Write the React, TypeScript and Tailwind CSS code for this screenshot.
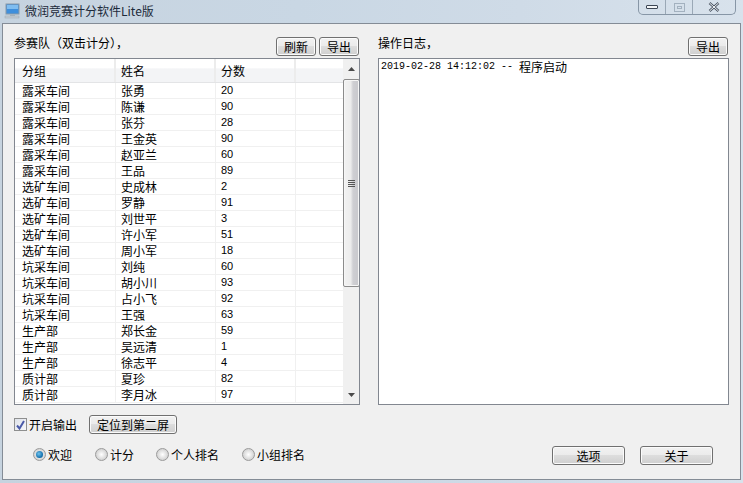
import React from "react";

const rows: [string, string, string][] = [
  ["露采车间", "张勇", "20"],
  ["露采车间", "陈谦", "90"],
  ["露采车间", "张芬", "28"],
  ["露采车间", "王金英", "90"],
  ["露采车间", "赵亚兰", "60"],
  ["露采车间", "王品", "89"],
  ["选矿车间", "史成林", "2"],
  ["选矿车间", "罗静", "91"],
  ["选矿车间", "刘世平", "3"],
  ["选矿车间", "许小军", "51"],
  ["选矿车间", "周小军", "18"],
  ["坑采车间", "刘纯", "60"],
  ["坑采车间", "胡小川", "93"],
  ["坑采车间", "占小飞", "92"],
  ["坑采车间", "王强", "63"],
  ["生产部", "郑长金", "59"],
  ["生产部", "吴远清", "1"],
  ["生产部", "徐志平", "4"],
  ["质计部", "夏珍", "82"],
  ["质计部", "李月冰", "97"],
];

const font = "[font-family:'Noto_Sans_CJK_SC','Liberation_Sans',sans-serif]";

function Btn({ label, w }: { label: string; w: string }) {
  return (
    <button
      className={`${w} h-[19px] flex items-center justify-center rounded-[3px] border border-[#707070] bg-[linear-gradient(#f2f2f2_0%,#ebebeb_48%,#dddddd_50%,#cfcfcf_100%)] text-[12px] leading-none text-black shadow-[inset_0_0_0_1px_#fbfbfb]`}
    >
      {label}
    </button>
  );
}

function Radio({ label, on, gap }: { label: string; on?: boolean; gap: string }) {
  return (
    <div className={`flex items-center gap-[2px] ${gap}`}>
      <span
        className={`w-[13px] h-[13px] rounded-full border border-[#9a9a9a] flex items-center justify-center bg-[radial-gradient(circle,#ffffff_0%,#d4d4d4_70%,#ececec_100%)]`}
      >
        {on && <span className="w-[7px] h-[7px] rounded-full bg-[radial-gradient(circle_at_40%_40%,#6fc3ee_0%,#0e6aa8_70%,#0a4a7c_100%)]" />}
      </span>
      <span className="text-[12px] leading-none">{label}</span>
    </div>
  );
}

function Arrow({ up }: { up?: boolean }) {
  return (
    <svg width="7" height="4" viewBox="0 0 7 4">
      <path d={up ? "M3.5 0L7 4H0Z" : "M0 0H7L3.5 4Z"} fill="#4a4a4a" />
    </svg>
  );
}

export default function App() {
  return (
    <div className={`w-[743px] h-[483px] overflow-hidden flex flex-col bg-[linear-gradient(90deg,#c6d3df_0%,#c9d7e4_40%,#cfdbe7_70%,#d8e2ec_100%)] text-black ${font}`}>
      {/* Title bar */}
      <div className="h-[23px] shrink-0 flex items-start">
        <div className="flex items-center pl-[4px] pt-[1px] h-[21px]">
          <svg width="16" height="16" viewBox="0 0 16 16">
            <rect x="2" y="1" width="13" height="10" fill="#3f8fdc" stroke="#8a9aa8" strokeWidth="1" />
            <rect x="3" y="2" width="11" height="4" fill="#7fbdf0" />
            <rect x="6" y="11" width="5" height="2" fill="#a8b4be" />
            <rect x="1" y="13" width="14" height="2" fill="#c4ccd3" stroke="#9aa6b0" strokeWidth="0.5" />
          </svg>
          <span className="ml-[5px] text-[12px] leading-none text-[#1c2a3a]">微润竞赛计分软件Lite版</span>
        </div>
        <div className="ml-auto mr-[7px] flex h-[15px] w-[98px] rounded-b-[5px] border border-t-0 border-[#8796a6] overflow-hidden">
          <div className="w-[27px] border-r border-[#9aa8b6] flex items-center justify-center">
            <span className="w-[12px] h-[4px] border border-[#3c4654] bg-[#f4f6f8] rounded-[1px]" />
          </div>
          <div className="w-[27px] border-r border-[#9aa8b6] flex items-center justify-center">
            <span className="w-[11px] h-[9px] border border-[#a3b1bf] flex items-center justify-center">
              <span className="w-[5px] h-[3px] border border-[#a3b1bf]" />
            </span>
          </div>
          <div className="flex-1 flex items-center justify-center">
            <svg width="12" height="10" viewBox="0 0 12 10">
              <path d="M1.5 1L10.5 9M10.5 1L1.5 9" stroke="#4b5664" strokeWidth="2.4" />
              <path d="M1.5 1L10.5 9M10.5 1L1.5 9" stroke="#f2f4f6" strokeWidth="1" />
            </svg>
          </div>
        </div>
      </div>

      {/* Client area */}
      <div className="mx-[2px] h-[457px] shrink-0 border border-[#848c96] bg-[#f0f0f0] flex flex-col px-[11px]">
        <div className="flex h-[381px] shrink-0">
          {/* Left */}
          <div className="w-[346px] shrink-0 flex flex-col">
            <div className="h-[34px] flex items-start">
              <span className="text-[12px] leading-none mt-[13px]">参赛队（双击计分），</span>
              <div className="ml-auto flex gap-[3px] mt-[13px] mr-[1px]">
                <Btn label="刷新" w="w-[40px]" />
                <Btn label="导出" w="w-[40px]" />
              </div>
            </div>
            <div className="h-[347px] border border-[#828790] bg-white flex overflow-hidden">
              <div className="w-[328px] shrink-0 overflow-hidden">
                <div className="flex h-[24px] bg-[linear-gradient(#ffffff_0%,#ffffff_40%,#f3f4f6_42%,#f3f4f6_100%)] border-b border-[#e3e4e6] text-[12px] leading-none">
                  <div className="w-[101px] pl-[7px] flex items-center border-r-2 border-[#ececec]">分组</div>
                  <div className="w-[100px] pl-[5px] flex items-center border-r-2 border-[#ececec]">姓名</div>
                  <div className="w-[80px] pl-[5px] flex items-center border-r-2 border-[#ececec]">分数</div>
                  <div className="flex-1" />
                </div>
                {rows.map((r, i) => (
                  <div key={i} className="flex h-[16px] border-b border-[#f0f0f0] text-[12px] leading-none">
                    <div className="w-[101px] pl-[7px] flex items-center border-r border-[#f0f0f0] text-[12px]">{r[0]}</div>
                    <div className="w-[100px] pl-[5px] flex items-center border-r border-[#f0f0f0]">{r[1]}</div>
                    <div className="w-[80px] pl-[5px] flex items-center border-r border-[#f0f0f0] text-[11px] font-['Liberation_Sans']">{r[2]}</div>
                    <div className="flex-1" />
                  </div>
                ))}
              </div>
              {/* Scrollbar */}
              <div className="w-[17px] shrink-0 bg-[#f0f0f0] flex flex-col">
                <div className="h-[20px] flex items-center justify-center"><Arrow up /></div>
                <div className="h-[208px] rounded-[2px] border border-[#8b8b8b] bg-[linear-gradient(90deg,#f2f2f2_0%,#ececec_45%,#cfcfd3_60%,#c8c8cc_100%)] flex flex-col items-center justify-center gap-[1px] shadow-[inset_0_0_0_1px_#f6f6f6]">
                  <span className="w-[7px] h-[1px] bg-[#555]" />
                  <span className="w-[7px] h-[1px] bg-[#555]" />
                  <span className="w-[7px] h-[1px] bg-[#555]" />
                  <span className="w-[7px] h-[1px] bg-[#555]" />
                </div>
                <div className="flex-1" />
                <div className="h-[18px] flex items-center justify-center"><Arrow /></div>
              </div>
            </div>
          </div>

          {/* Right */}
          <div className="ml-[18px] w-[351px] shrink-0 flex flex-col">
            <div className="h-[34px] flex items-start">
              <span className="text-[12px] leading-none mt-[13px]">操作日志，</span>
              <div className="ml-auto mt-[13px] mr-[1px]">
                <Btn label="导出" w="w-[40px]" />
              </div>
            </div>
            <div className="h-[347px] border border-[#828790] bg-white px-[2px] pt-[1px]">
              <div className="flex items-center h-[14px] font-['Liberation_Mono'] text-[10px] leading-none whitespace-pre">
                2019-02-28 14:12:02 -- <span className={`text-[12px] ${font}`}>程序启动</span>
              </div>
            </div>
          </div>
        </div>

        {/* Bottom */}
        <div className="flex items-center h-[19px] mt-[10px]">
          <span className="w-[13px] h-[13px] border border-[#8e8f8f] bg-[linear-gradient(135deg,#dfe3ea,#f6f7f9)] flex items-center justify-center">
            <svg width="9" height="10" viewBox="0 0 9 10">
              <path d="M1 5.5L3.5 8.5L8 1" fill="none" stroke="#4a5aa8" strokeWidth="2" />
            </svg>
          </span>
          <span className="ml-[2px] text-[12px] leading-none">开启输出</span>
          <div className="ml-[12px]">
            <Btn label="定位到第二屏" w="w-[88px]" />
          </div>
        </div>
        <div className="flex items-center h-[21px] mt-[10px] pl-[19px]">
          <Radio label="欢迎" on gap="w-[62px]" />
          <Radio label="计分" gap="w-[61px]" />
          <Radio label="个人排名" gap="w-[86px]" />
          <Radio label="小组排名" gap="w-[80px]" />
          <div className="ml-auto flex gap-[15px] mr-[16px] mt-[2px]">
            <Btn label="选项" w="w-[73px]" />
            <Btn label="关于" w="w-[73px]" />
          </div>
        </div>
      </div>
    </div>
  );
}
